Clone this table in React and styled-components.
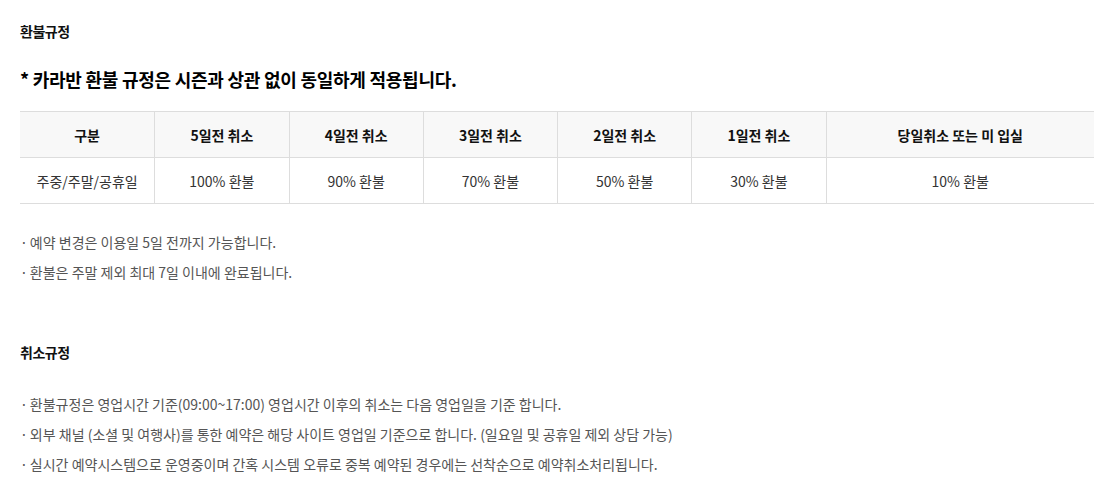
import styled, { createGlobalStyle } from 'styled-components'

const GlobalStyle = createGlobalStyle`
    body {
        margin: 0;
        background: #fff;
        font-family: "Noto Sans CJK KR", "Noto Sans", sans-serif;
        color: #111;
    }
`

const Page = styled.div`
    display: flex;
    flex-direction: column;
    padding: 20px 14px 0 20px;
`

const Title = styled.h3`
    margin: 0;
    font-size: 14px;
    font-weight: 700;
    letter-spacing: -0.5px;
    line-height: 22px;
    color: #111;
    margin-top: ${props => props.top || 0}px;
`

const Lead = styled.p`
    margin: 23px 0 0;
    font-size: 18px;
    font-weight: 700;
    letter-spacing: -0.25px;
    line-height: 28px;
    color: #000;
`

const Table = styled.div`
    margin-top: 18px;
    display: grid;
    grid-template-columns: repeat(6, 1fr) 2fr;
    border-top: 1px solid #ddd;
`

const Cell = styled.div`
    display: flex;
    align-items: center;
    justify-content: center;
    height: 45px;
    border-bottom: 1px solid #ddd;
    border-left: ${props => props.first ? 'none' : '1px solid #ddd'};
    background: ${props => props.head ? '#f8f8f8' : '#fff'};
    font-size: 14px;
    font-weight: ${props => props.head ? 700 : 400};
    letter-spacing: 0;
    color: ${props => props.head ? '#111' : '#333'};
`

const Notes = styled.ul`
    list-style: none;
    margin: ${props => props.top || 0}px 0 0;
    padding: 0;
    display: flex;
    flex-direction: column;
    gap: 8px;
`

const Note = styled.li`
    font-size: 14px;
    line-height: 22px;
    letter-spacing: 0;
    color: #555;
    &::before {
        content: '·';
        margin-right: 2px;
    }
`

const heads = ['구분', '5일전 취소', '4일전 취소', '3일전 취소', '2일전 취소', '1일전 취소', '당일취소 또는 미 입실']
const values = ['주중/주말/공휴일', '100% 환불', '90% 환불', '70% 환불', '50% 환불', '30% 환불', '10% 환불']

export default function App() {
    return (
        <Page>
            <GlobalStyle/>
            <Title>환불규정</Title>
            <Lead>* 카라반 환불 규정은 시즌과 상관 없이 동일하게 적용됩니다.</Lead>
            <Table>
                {heads.map((h, i) => <Cell key={h} head first={i == 0}>{h}</Cell>)}
                {values.map((v, i) => <Cell key={v} first={i == 0}>{v}</Cell>)}
            </Table>
            <Notes top={27}>
                <Note>예약 변경은 이용일 5일 전까지 가능합니다.</Note>
                <Note>환불은 주말 제외 최대 7일 이내에 완료됩니다.</Note>
            </Notes>
            <Title top={58}>취소규정</Title>
            <Notes top={30}>
                <Note>환불규정은 영업시간 기준(09:00~17:00) 영업시간 이후의 취소는 다음 영업일을 기준 합니다.</Note>
                <Note>외부 채널 (소셜 및 여행사)를 통한 예약은 해당 사이트 영업일 기준으로 합니다. (일요일 및 공휴일 제외 상담 가능)</Note>
                <Note>실시간 예약시스템으로 운영중이며 간혹 시스템 오류로 중복 예약된 경우에는 선착순으로 예약취소처리됩니다.</Note>
            </Notes>
        </Page>
    )
}
